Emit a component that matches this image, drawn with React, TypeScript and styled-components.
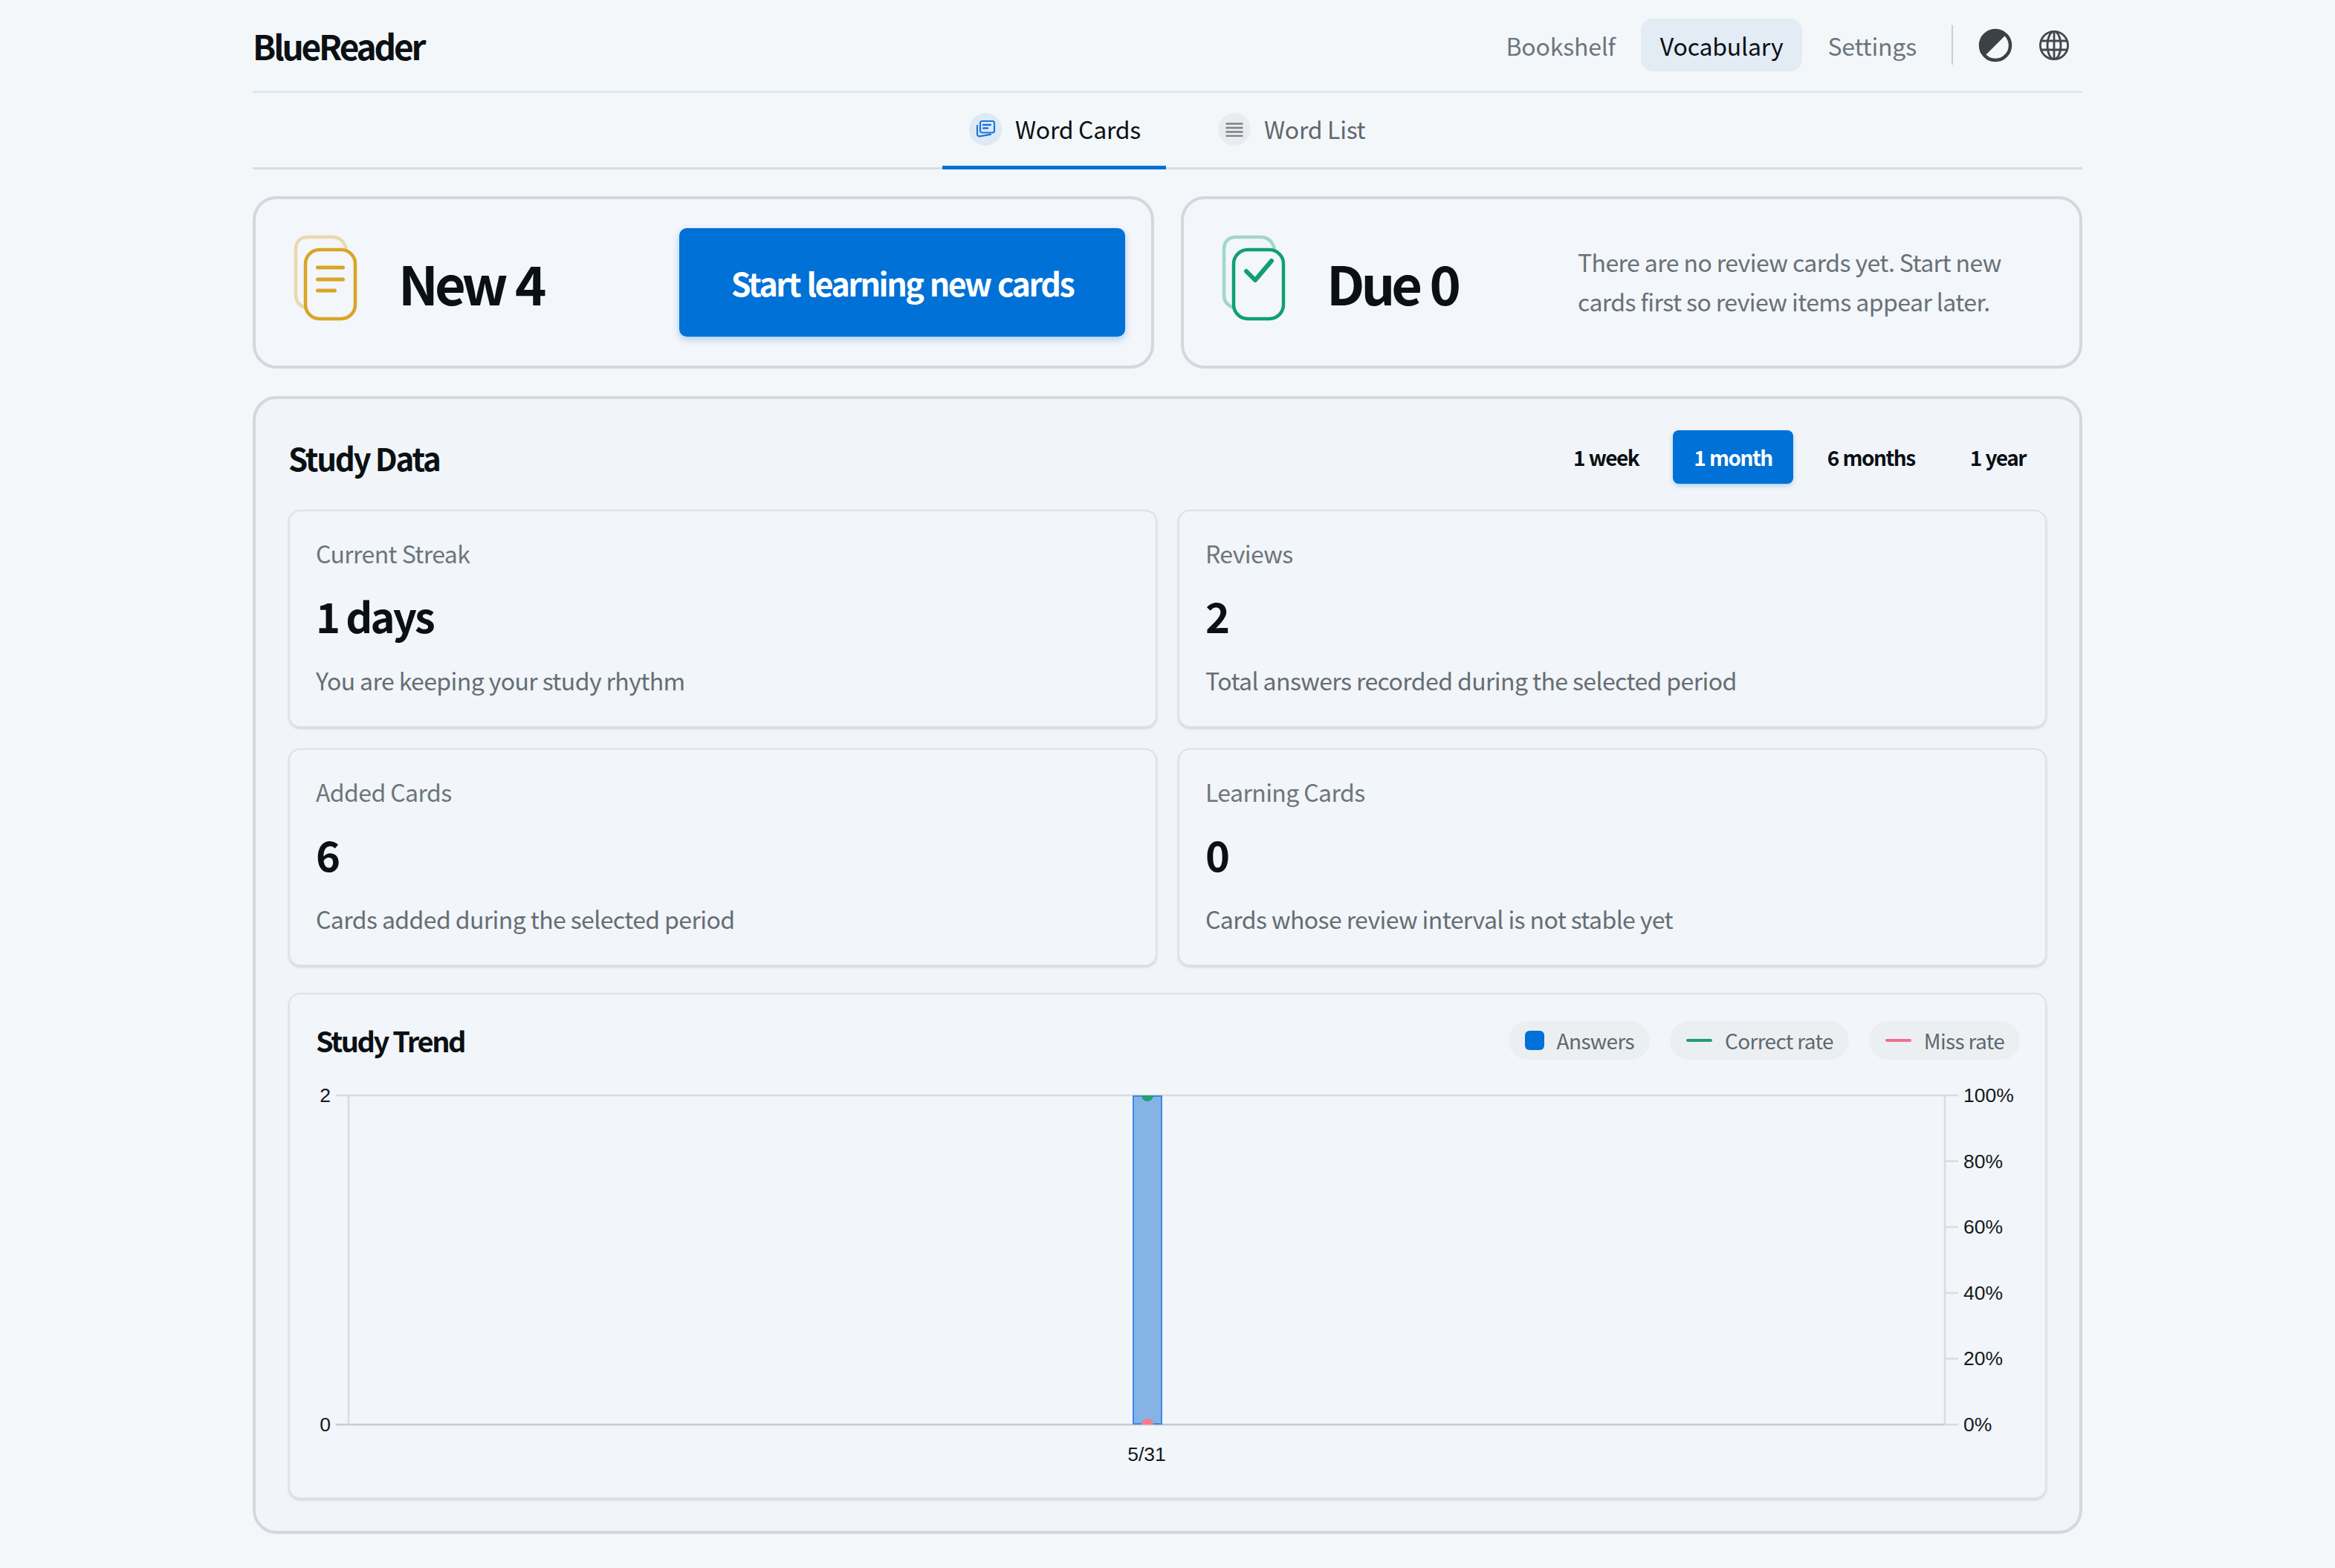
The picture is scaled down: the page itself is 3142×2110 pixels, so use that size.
import styled, { createGlobalStyle } from 'styled-components'

const GlobalStyle = createGlobalStyle`
    * {
        box-sizing: border-box;
    }
    html,
    body {
        margin: 0;
        padding: 0;
        background: #f4f7fa;
        color: #0b1014;
        font-family: 'Noto Sans CJK SC', 'Noto Sans', sans-serif;
    }
`

const Page = styled.div`
    width: 3142px;
    height: 2110px;
    padding: 0 340px;
    overflow: hidden;
`

const Header = styled.header`
    display: flex;
    align-items: center;
    justify-content: space-between;
    height: 125px;
    border-bottom: 3px solid #dfe8f0;
`

const Logo = styled.div`
    font-size: 46px;
    font-weight: 700;
    letter-spacing: -3.2px;
    line-height: 1;
`

const Nav = styled.nav`
    display: flex;
    align-items: center;
    height: 72px;
    margin-top: -1px;
`

const NavLink = styled.div<{ $active?: boolean }>`
    display: flex;
    align-items: center;
    height: 71px;
    padding: 0 26px;
    margin-right: 8px;
    border-radius: 16px;
    font-size: 32px;
    letter-spacing: -0.2px;
    color: ${(p) => (p.$active ? '#0b1014' : '#6d757b')};
    background: ${(p) => (p.$active ? '#e3ebf4' : 'transparent')};
`

const NavDivider = styled.div`
    width: 2px;
    height: 53px;
    margin: 0 34px 0 13px;
    background: #c9ced2;
`

const IconButton = styled.div`
    display: flex;
    width: 46px;
    height: 46px;
    margin-right: 33px;
    align-items: center;
    justify-content: center;
    &:last-child {
        margin-right: 15px;
    }
`

const Tabs = styled.div`
    display: flex;
    justify-content: center;
    height: 103px;
    border-bottom: 3px solid #d9dde1;
`

const Tab = styled.div<{ $active?: boolean }>`
    display: flex;
    align-items: flex-start;
    gap: 18px;
    width: 301px;
    padding: 27px 0 0 36px;
    margin-right: 33px;
    font-size: 32px;
    letter-spacing: -0.3px;
    line-height: 42px;
    color: ${(p) => (p.$active ? '#0b1014' : '#5f676d')};
    border-bottom: ${(p) => (p.$active ? '5px solid #0071d9' : 'none')};
    height: ${(p) => (p.$active ? '103px' : '100px')};
    &:last-child {
        margin-right: 0;
        width: 272px;
        padding-left: 37px;
    }
`

const TabIcon = styled.div<{ $active?: boolean }>`
    display: flex;
    flex: none;
    align-items: center;
    justify-content: center;
    width: 44px;
    height: 44px;
    border-radius: 50%;
    background: ${(p) => (p.$active ? '#dfe9f5' : '#e9ecef')};
`

const SummaryRow = styled.div`
    display: grid;
    grid-template-columns: 1213px 1213px;
    gap: 36px;
    margin-top: 36px;
`

const SummaryCard = styled.div`
    display: flex;
    align-items: center;
    height: 232px;
    padding: 0 40px 0 50px;
    border: 4px solid #d3d8dc;
    border-radius: 32px;
    background: #f3f6fa;
`

const DeckIcon = styled.svg`
    flex: none;
    width: 90px;
    height: 118px;
    margin-top: -12px;
`

const SummaryValue = styled.div`
    flex: none;
    width: 374px;
    margin-left: 52px;
    font-size: 72px;
    font-weight: 700;
    line-height: 1;
    letter-spacing: -5px;
    word-spacing: 3px;
`

const StartButton = styled.button`
    display: block;
    flex: none;
    width: 600px;
    height: 146px;
    margin-top: -1px;
    margin-left: 4px;
    padding: 0;
    border: none;
    border-radius: 10px;
    background: #0071d6;
    box-shadow: 0 4px 10px rgba(0, 113, 214, 0.3);
    color: #fff;
    font-family: inherit;
    font-size: 43px;
    font-weight: 700;
    letter-spacing: -2.5px;
    word-spacing: 2px;
`

const SummaryNote = styled.div`
    font-size: 32px;
    letter-spacing: -0.58px;
    line-height: 53px;
    color: #687177;
    margin-left: -36px;
    margin-top: -3px;
`

const StudyPanel = styled.section`
    height: 1531px;
    margin-top: 37px;
    padding: 0 44px;
    border: 4px solid #d3d8dc;
    border-radius: 32px;
    background: #f1f5f9;
`

const PanelHeader = styled.div`
    display: flex;
    align-items: center;
    justify-content: space-between;
    height: 149px;
    padding-top: 7px;
`

const PanelTitle = styled.h2`
    margin: 0;
    font-size: 42px;
    font-weight: 700;
    letter-spacing: -2.2px;
`

const RangeGroup = styled.div`
    display: flex;
    gap: 18px;
    margin-right: 0;
`

const RangeButton = styled.div<{ $active?: boolean }>`
    display: flex;
    align-items: center;
    height: 72px;
    padding: 0 28px;
    border-radius: 8px;
    font-size: 28px;
    font-weight: 700;
    letter-spacing: -1.5px;
    word-spacing: 1px;
    color: ${(p) => (p.$active ? '#fff' : '#0b1014')};
    background: ${(p) => (p.$active ? '#0071d6' : 'transparent')};
    box-shadow: ${(p) => (p.$active ? '0 3px 6px rgba(0, 113, 214, 0.25)' : 'none')};
`

const StatGrid = styled.div`
    display: grid;
    grid-template-columns: 1169px 1169px;
    grid-auto-rows: 293px;
    column-gap: 28px;
    row-gap: 28px;
`

const StatCard = styled.div`
    padding: 33px 35px 0;
    border: 2px solid #dde2e6;
    border-radius: 16px;
    background: #f2f5f9;
    box-shadow: 0 2px 3px rgba(120, 130, 140, 0.25);
`

const StatLabel = styled.div`
    font-size: 32px;
    letter-spacing: -0.6px;
    line-height: 46px;
    color: #6d757b;
`

const StatValue = styled.div`
    margin-top: 27px;
    font-size: 56px;
    font-weight: 700;
    line-height: 68px;
    letter-spacing: -2.8px;
`

const StatNote = styled.div`
    margin-top: 30px;
    font-size: 32px;
    letter-spacing: -0.6px;
    line-height: 46px;
    color: #656e74;
`

const TrendCard = styled.div`
    height: 681px;
    margin-top: 36px;
    padding-top: 36px;
    border: 2px solid #dde2e6;
    border-radius: 16px;
    background: #f2f5f9;
    box-shadow: 0 2px 3px rgba(120, 130, 140, 0.25);
`

const TrendHeader = styled.div`
    display: flex;
    align-items: center;
    justify-content: space-between;
    height: 52px;
    padding: 0 34px 0 35px;
`

const TrendTitle = styled.h3`
    margin: -2px 0 0;
    font-size: 38px;
    font-weight: 700;
    letter-spacing: -2.4px;
`

const Legend = styled.div`
    display: flex;
    gap: 27px;
`

const LegendPill = styled.div`
    display: flex;
    align-items: center;
    height: 52px;
    padding: 0 21px 0 22px;
    gap: 17px;
    border-radius: 26px;
    background: #eceff2;
    font-size: 28px;
    letter-spacing: -0.65px;
    color: #5f686e;
`

const LegendSwatch = styled.span`
    width: 26px;
    height: 26px;
    border-radius: 6px;
    background: #0071d9;
`

const LegendLine = styled.span<{ $color: string }>`
    width: 35px;
    height: 4px;
    border-radius: 2px;
    background: ${(p) => p.$color};
`

const ChartSvg = styled.svg`
    display: block;
    margin-top: 14px;
    font-family: 'Liberation Sans', Arial, sans-serif;
    font-size: 26.5px;
    fill: #15191c;
`

// chart coordinates below are in the svg's own space, top of plot at y=34
const plotLeft = 79
const plotRight = 2227
const plotTop = 34
const plotBottom = 477
const percentTicks = ['100%', '80%', '60%', '40%', '20%', '0%']

const TrendChart = () => (
    <ChartSvg width="2362" height="560" viewBox="0 0 2362 560">
        <line x1={62} x2={plotRight} y1={plotTop} y2={plotTop} stroke="#d8dce0" strokeWidth="2.5" />
        <line x1={62} x2={plotRight} y1={plotBottom} y2={plotBottom} stroke="#c8cbce" strokeWidth="2.5" />
        <line x1={plotLeft} x2={plotLeft} y1={plotTop} y2={plotBottom} stroke="#d8dce0" strokeWidth="2.5" />
        <line x1={plotRight} x2={plotRight} y1={plotTop} y2={plotBottom} stroke="#d8dce0" strokeWidth="2.5" />
        <text x={55} y={plotTop + 9} textAnchor="end">2</text>
        <text x={55} y={plotBottom + 9} textAnchor="end">0</text>
        {percentTicks.map((label, index) => {
            const y = plotTop + ((plotBottom - plotTop) / 5) * index
            return (
                <g key={label}>
                    <line x1={plotRight} x2={plotRight + 18} y1={y} y2={y} stroke="#d8dce0" strokeWidth="2.5" />
                    <text x={plotRight + 25} y={y + 9}>{label}</text>
                </g>
            )
        })}
        <rect
            x={1135}
            y={plotTop + 1}
            width={38}
            height={plotBottom - plotTop - 2}
            fill="#86b3e6"
            stroke="#3b8ae6"
            strokeWidth="2"
        />
        <clipPath id="plot-area">
            <rect x={plotLeft} y={plotTop} width={plotRight - plotLeft} height={plotBottom - plotTop} />
        </clipPath>
        <g clipPath="url(#plot-area)">
            <circle cx={1154} cy={plotTop} r={8} fill="#20a26f" />
            <circle cx={1154} cy={plotBottom} r={8} fill="#f57c90" />
        </g>
        <text x={1153} y={526} textAnchor="middle">5/31</text>
    </ChartSvg>
)

const ThemeIcon = () => (
    <svg width="46" height="46" viewBox="0 0 46 46">
        <path d="M23 3 A20 20 0 0 0 9 37 L37 9 A20 20 0 0 0 23 3 Z" fill="#3c4145" />
        <circle cx="23" cy="23" r="20" fill="none" stroke="#3c4145" strokeWidth="4.5" />
    </svg>
)

const GlobeIcon = () => (
    <svg width="42" height="42" viewBox="0 0 42 42" fill="none" stroke="#43484c" strokeWidth="2.8">
        <circle cx="21" cy="21" r="18.6" />
        <ellipse cx="21" cy="21" rx="9" ry="18.6" />
        <path d="M21 2.4 V39.6 M3.6 15 H38.4 M3.6 27 H38.4" />
    </svg>
)

const CardsIcon = () => (
    <svg width="28" height="28" viewBox="0 0 28 28" fill="none" stroke="#1a76d9" strokeWidth="2.2" strokeLinecap="round">
        <rect x="7" y="3" width="19" height="15.5" rx="2.5" />
        <path d="M11 8 H21 M11 12.5 H17" strokeWidth="2.4" />
        <path d="M3 9 V20.5 C3 22.5 4.5 23.6 6.3 23.3 L21 20.8" />
    </svg>
)

const ListIcon = () => (
    <svg width="24" height="20" viewBox="0 0 24 20" fill="none" stroke="#7a8187" strokeWidth="2.6">
        <path d="M0.5 2.5 H23.5 M0.5 8 H23.5 M0.5 13.5 H23.5 M0.5 19 H23.5" />
    </svg>
)

const DeckOutline = ({ color, children }: { color: string; children: React.ReactNode }) => (
    <DeckIcon viewBox="0 0 90 118" fill="none" stroke={color}>
        <path
            opacity="0.36"
            d="M17 99 C8 96 4 90 4 82 V21 C4 10 10 4 21 4 H53 C62 4 69 9 72 20"
            strokeWidth="4.5"
        />
        <rect x="17" y="21" width="67" height="93" rx="19" strokeWidth="4.5" />
        {children}
    </DeckIcon>
)

const stats = [
    { label: 'Current Streak', value: '1 days', note: 'You are keeping your study rhythm' },
    { label: 'Reviews', value: '2', note: 'Total answers recorded during the selected period' },
    { label: 'Added Cards', value: '6', note: 'Cards added during the selected period' },
    { label: 'Learning Cards', value: '0', note: 'Cards whose review interval is not stable yet' },
]

const ranges = ['1 week', '1 month', '6 months', '1 year']

const App = () => (
    <Page>
        <GlobalStyle />
        <Header>
            <Logo>BlueReader</Logo>
            <Nav>
                <NavLink>Bookshelf</NavLink>
                <NavLink $active>Vocabulary</NavLink>
                <NavLink>Settings</NavLink>
                <NavDivider />
                <IconButton>
                    <ThemeIcon />
                </IconButton>
                <IconButton>
                    <GlobeIcon />
                </IconButton>
            </Nav>
        </Header>

        <Tabs>
            <Tab $active>
                <TabIcon $active>
                    <CardsIcon />
                </TabIcon>
                Word Cards
            </Tab>
            <Tab>
                <TabIcon>
                    <ListIcon />
                </TabIcon>
                Word List
            </Tab>
        </Tabs>

        <SummaryRow>
            <SummaryCard>
                <DeckOutline color="#d9a526">
                    <path d="M33.5 45 H67.5 M33.5 61 H67.5 M33.5 76 H56.5" strokeWidth="5" strokeLinecap="round" />
                </DeckOutline>
                <SummaryValue>New 4</SummaryValue>
                <StartButton>Start learning new cards</StartButton>
            </SummaryCard>
            <SummaryCard>
                <DeckOutline color="#0fa071">
                    <path d="M34 50 L46 62 L68 36" strokeWidth="6" strokeLinecap="round" strokeLinejoin="round" />
                </DeckOutline>
                <SummaryValue>Due 0</SummaryValue>
                <SummaryNote>
                    There are no review cards yet. Start new
                    <br />
                    cards first so review items appear later.
                </SummaryNote>
            </SummaryCard>
        </SummaryRow>

        <StudyPanel>
            <PanelHeader>
                <PanelTitle>Study Data</PanelTitle>
                <RangeGroup>
                    {ranges.map((range) => (
                        <RangeButton key={range} $active={range === '1 month'}>
                            {range}
                        </RangeButton>
                    ))}
                </RangeGroup>
            </PanelHeader>

            <StatGrid>
                {stats.map((stat) => (
                    <StatCard key={stat.label}>
                        <StatLabel>{stat.label}</StatLabel>
                        <StatValue>{stat.value}</StatValue>
                        <StatNote>{stat.note}</StatNote>
                    </StatCard>
                ))}
            </StatGrid>

            <TrendCard>
                <TrendHeader>
                    <TrendTitle>Study Trend</TrendTitle>
                    <Legend>
                        <LegendPill>
                            <LegendSwatch />
                            Answers
                        </LegendPill>
                        <LegendPill>
                            <LegendLine $color="#259d6e" />
                            Correct rate
                        </LegendPill>
                        <LegendPill>
                            <LegendLine $color="#f0708c" />
                            Miss rate
                        </LegendPill>
                    </Legend>
                </TrendHeader>
                <TrendChart />
            </TrendCard>
        </StudyPanel>
    </Page>
)

export default App
